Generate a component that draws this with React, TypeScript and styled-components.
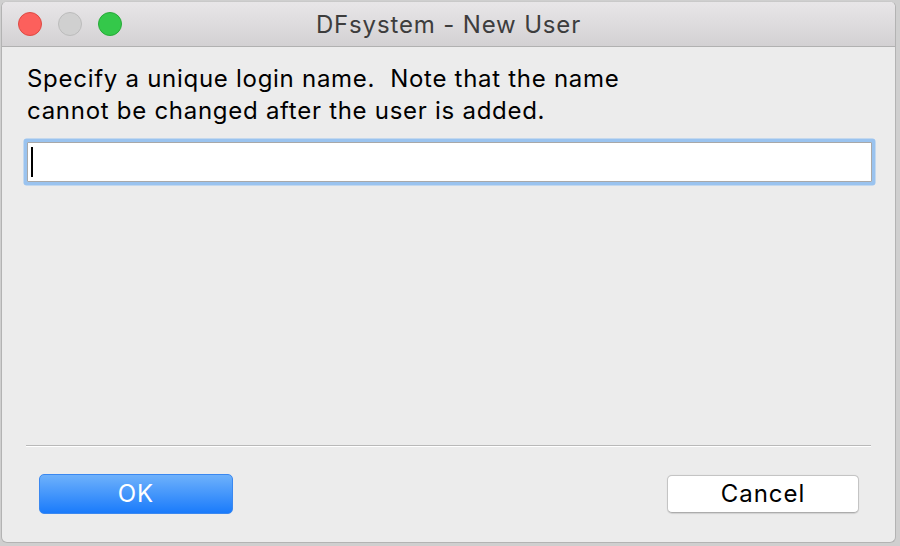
import styled, { createGlobalStyle } from "styled-components";

const GlobalStyle = createGlobalStyle`
  html, body {
    margin: 0;
    padding: 0;
    background: #cfcfcf;
  }
  body {
    font-family: Inter, "Liberation Sans", Arial, sans-serif;
  }
`;

function App() {
  return (
    <>
      <GlobalStyle />
      <Screen>
        <Window>
          <TitleBar>
            <Lights>
              <Light color="red" />
              <Light color="gray" />
              <Light color="green" />
            </Lights>
            <Title>DFsystem - New User</Title>
          </TitleBar>
          <Content>
            <Message>
              Specify a unique login name.{"  "}Note that the name
              {"\n"}cannot be changed after the user is added.
            </Message>
            <TextField>
              <Caret />
            </TextField>
          </Content>
          <Separator />
          <Footer>
            <Button variant="primary">OK</Button>
            <Button variant="default">Cancel</Button>
          </Footer>
        </Window>
      </Screen>
    </>
  );
}

export default App;

const Screen = styled.div`
  width: 900px;
  height: 546px;
  box-sizing: border-box;
  padding: 1px 4px 3px 1px;
  display: flex;
`;

const Window = styled.div`
  flex: 1;
  display: flex;
  flex-direction: column;
  background: #ececec;
  border: 1px solid #b3b3b3;
  border-top-color: #c9c9c9;
  border-radius: 6px;
  overflow: hidden;
`;

const TitleBar = styled.div`
  height: 44px;
  flex-shrink: 0;
  display: flex;
  align-items: center;
  justify-content: center;
  position: relative;
  background: linear-gradient(#e8e6e8, #d3d1d3);
  border-bottom: 1px solid #b1b1b1;
`;

const Lights = styled.div`
  position: absolute;
  left: 16px;
  top: 10px;
  display: flex;
  gap: 16px;
`;

const lightColors: Record<string, [string, string]> = {
  red: ["#fc605c", "#de4a43"],
  gray: ["#d0d0d0", "#bcbcbc"],
  green: ["#34c84a", "#27aa38"],
};

const Light = styled.span<{ color: string }>`
  width: 24px;
  height: 24px;
  box-sizing: border-box;
  border-radius: 50%;
  background: ${({ color }) => lightColors[color][0]};
  border: 1px solid ${({ color }) => lightColors[color][1]};
`;

const Title = styled.div`
  font-size: 24px;
  letter-spacing: 0.85px;
  color: #3d3d3d;
`;

const Content = styled.div`
  flex: 1;
  padding: 16px 23px 0 25px;
`;

const Message = styled.div`
  white-space: pre;
  font-size: 24px;
  letter-spacing: 0.72px;
  line-height: 32px;
  color: #000;
`;

const TextField = styled.div`
  margin-top: 15px;
  height: 40px;
  box-sizing: border-box;
  background: #fff;
  border: 1px solid #a8a8a8;
  box-shadow: 0 0 0 3.5px #9ac3ef;
  border-radius: 1px;
  display: flex;
  align-items: center;
  padding-left: 3px;
`;

const Caret = styled.span`
  width: 2px;
  height: 30px;
  background: #000;
`;

const Separator = styled.div`
  margin: 0 24px 0 24px;
  height: 1px;
  background: #b9b9b9;
  border-bottom: 1px solid #fff;
`;

const Footer = styled.div`
  height: 95px;
  box-sizing: border-box;
  padding: 27px 36px 0 37px;
  display: flex;
  justify-content: space-between;
  align-items: flex-start;
`;

const Button = styled.button<{ variant: string }>`
  font-family: Inter, "Liberation Sans", Arial, sans-serif;
  font-size: 24px;
  letter-spacing: 1px;
  border-radius: 5px;
  cursor: pointer;
  outline: none;
  padding: 0 0 2px;

  ${({ variant }) =>
    variant === "primary"
      ? `
    width: 194px;
    height: 40px;
    color: #fff;
    border: 1px solid #3a88f0;
    background: linear-gradient(#6eb1fb, #1a7bfb);
  `
      : `
    width: 192px;
    height: 38px;
    margin-top: 1px;
    color: #000;
    border: 1px solid #c4c4c4;
    border-bottom-color: #acacac;
    background: #fff;
    box-shadow: 0 0.5px 1px rgba(0, 0, 0, 0.12);
  `}
`;
